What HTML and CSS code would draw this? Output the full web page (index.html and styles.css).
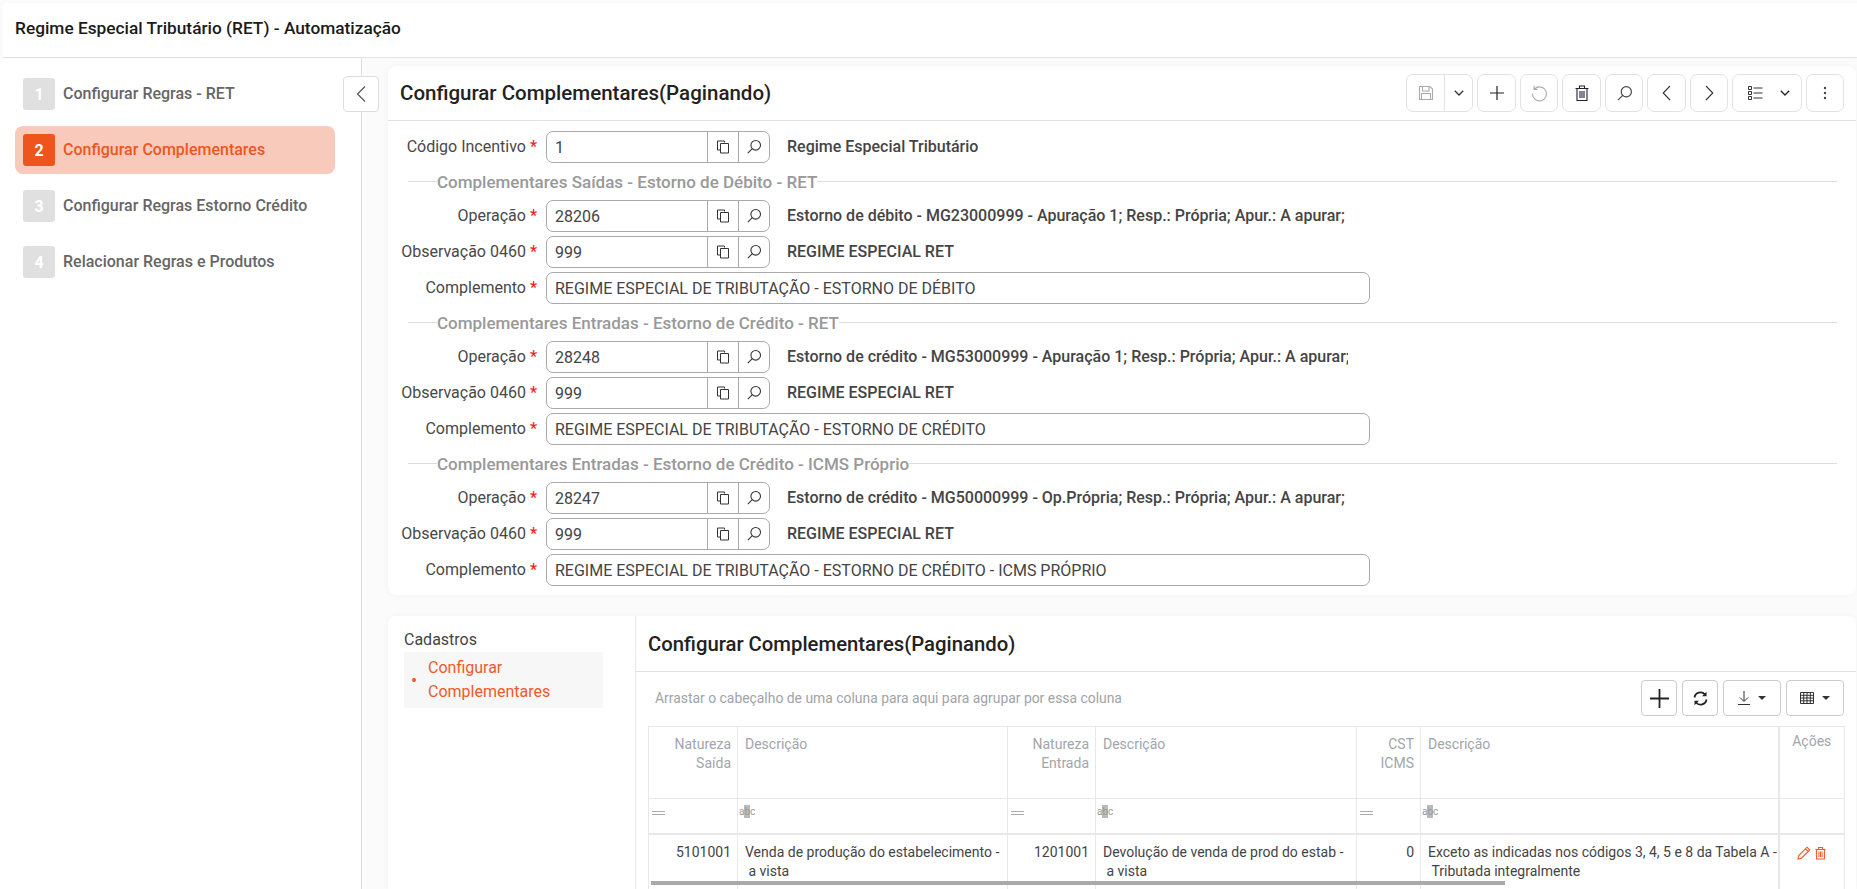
FILE: index.html
```html
<!DOCTYPE html>
<html lang="pt-BR">
<head>
<meta charset="utf-8">
<title>Regime Especial Tributário (RET) - Automatização</title>
<link rel="stylesheet" href="styles.css">
</head>
<body>
<svg class="defs" aria-hidden="true">
  <symbol id="copy" viewBox="0 0 16 16"><path d="M9.500 3.500V2H2.500v9H5M5.500 4.500h8v9.500h-8z" fill="none" stroke="currentColor"/></symbol>
  <symbol id="search" viewBox="0 0 16 16"><circle cx="9.700" cy="6.300" r="4.800" fill="none" stroke="currentColor" stroke-width="1.100"/><path d="M6.300 9.700 1.800 14.200" stroke="currentColor" stroke-width="1.100"/></symbol>
</svg>
<header class="app-header">Regime Especial Tributário (RET) - Automatização</header>
<div class="app-body">
  <aside class="wizard">
    <button class="collapse" type="button"><svg width="12" height="18" viewBox="0 0 12 18"><path d="M10 1.500 2.500 9l7.500 7.500" fill="none" stroke="#555" stroke-width="1.200"/></svg></button>
    <div class="step"><span class="step-num">1</span><span class="step-text">Configurar Regras - RET</span></div>
    <div class="step active"><span class="step-num">2</span><span class="step-text">Configurar Complementares</span></div>
    <div class="step"><span class="step-num">3</span><span class="step-text">Configurar Regras Estorno Crédito</span></div>
    <div class="step"><span class="step-num">4</span><span class="step-text">Relacionar Regras e Produtos</span></div>
  </aside>
  <main class="content">
    <section class="card form-card">
      <div class="form-head">
        <h1>Configurar Complementares(Paginando)</h1>
        <div class="toolbar">
          <div class="tbtn group"><span class="seg seg-save"><svg width="16" height="16" viewBox="0 0 16 16"><path d="M1.500 1.500h10.500l2.500 2.500v10.500h-13zM4.500 1.500v4.500h6.500v-4.500M3.500 14.500v-6h9v6" fill="none" stroke="#aaa" stroke-width="1.100"/></svg></span><span class="seg seg-caret"><svg width="10" height="6" viewBox="0 0 10 6"><path d="M.8.800 5 5 9.200.800" fill="none" stroke="#333" stroke-width="1.300"/></svg></span></div>
          <div class="tbtn w39"><svg width="16" height="16" viewBox="0 0 16 16"><path d="M8 1v14M1 8h14" stroke="#222" stroke-width="1.200"/></svg></div>
          <div class="tbtn w37"><svg width="17" height="17" viewBox="0 0 17 17"><path d="M3.300 4.200A7 7 0 1 1 1.500 8.500M3 .8v3.600h3.600" fill="none" stroke="#aaa" stroke-width="1.100"/></svg></div>
          <div class="tbtn w39"><svg width="14" height="16" viewBox="0 0 14 16"><path d="M.5 3.500h13M4.500 3.500V1h5v2.500M2 3.500v12h10v-12M5 6v7M7 6v7M9 6v7" fill="none" stroke="#223" stroke-width="1.100"/></svg></div>
          <div class="tbtn w37"><svg width="17" height="17" viewBox="0 0 16 16"><use href="#search"/></svg></div>
          <div class="tbtn w39"><svg width="9" height="16" viewBox="0 0 9 16"><path d="M8 1 1.200 8 8 15" fill="none" stroke="#333" stroke-width="1.100"/></svg></div>
          <div class="tbtn w37"><svg width="9" height="16" viewBox="0 0 9 16"><path d="M1 1l6.800 7L1 15" fill="none" stroke="#333" stroke-width="1.100"/></svg></div>
          <div class="tbtn w69"><svg width="15" height="14" viewBox="0 0 15 14"><path d="M.5.500h3v3h-3zM.5 5.500h3v3h-3zM.5 10.500h3v3h-3zM5.500 2h9M5.500 7h9M5.500 12h9" fill="none" stroke="#333"/></svg><svg width="10" height="6" viewBox="0 0 10 6"><path d="M.8.800 5 5 9.200.800" fill="none" stroke="#222" stroke-width="1.300"/></svg></div>
          <div class="tbtn w37"><svg width="4" height="14" viewBox="0 0 4 14"><circle cx="2" cy="2" r="1.200" fill="#444"/><circle cx="2" cy="7" r="1.200" fill="#444"/><circle cx="2" cy="12" r="1.200" fill="#444"/></svg></div>
        </div>
      </div>
      <div class="form-body">
        <div class="row">
          <label class="lbl">Código Incentivo <em>*</em></label>
          <div class="lookup"><span class="val">1</span><span class="add"><svg><use href="#copy"/></svg></span><span class="add"><svg><use href="#search"/></svg></span></div>
          <span class="desc">Regime Especial Tributário</span>
        </div>
        <div class="legend"><span>Complementares Saídas - Estorno de Débito - RET</span></div>
        <div class="row">
          <label class="lbl">Operação <em>*</em></label>
          <div class="lookup"><span class="val">28206</span><span class="add"><svg><use href="#copy"/></svg></span><span class="add"><svg><use href="#search"/></svg></span></div>
          <span class="desc">Estorno de débito - MG23000999 - Apuração 1; Resp.: Própria; Apur.: A apurar;</span>
        </div>
        <div class="row">
          <label class="lbl">Observação 0460 <em>*</em></label>
          <div class="lookup"><span class="val">999</span><span class="add"><svg><use href="#copy"/></svg></span><span class="add"><svg><use href="#search"/></svg></span></div>
          <span class="desc">REGIME ESPECIAL RET</span>
        </div>
        <div class="row">
          <label class="lbl">Complemento <em>*</em></label>
          <div class="textbox">REGIME ESPECIAL DE TRIBUTAÇÃO - ESTORNO DE DÉBITO</div>
        </div>
        <div class="legend"><span>Complementares Entradas - Estorno de Crédito - RET</span></div>
        <div class="row">
          <label class="lbl">Operação <em>*</em></label>
          <div class="lookup"><span class="val">28248</span><span class="add"><svg><use href="#copy"/></svg></span><span class="add"><svg><use href="#search"/></svg></span></div>
          <span class="desc">Estorno de crédito - MG53000999 - Apuração 1; Resp.: Própria; Apur.: A apurar;</span>
        </div>
        <div class="row">
          <label class="lbl">Observação 0460 <em>*</em></label>
          <div class="lookup"><span class="val">999</span><span class="add"><svg><use href="#copy"/></svg></span><span class="add"><svg><use href="#search"/></svg></span></div>
          <span class="desc">REGIME ESPECIAL RET</span>
        </div>
        <div class="row">
          <label class="lbl">Complemento <em>*</em></label>
          <div class="textbox">REGIME ESPECIAL DE TRIBUTAÇÃO - ESTORNO DE CRÉDITO</div>
        </div>
        <div class="legend"><span>Complementares Entradas - Estorno de Crédito - ICMS Próprio</span></div>
        <div class="row">
          <label class="lbl">Operação <em>*</em></label>
          <div class="lookup"><span class="val">28247</span><span class="add"><svg><use href="#copy"/></svg></span><span class="add"><svg><use href="#search"/></svg></span></div>
          <span class="desc">Estorno de crédito - MG50000999 - Op.Própria; Resp.: Própria; Apur.: A apurar;</span>
        </div>
        <div class="row">
          <label class="lbl">Observação 0460 <em>*</em></label>
          <div class="lookup"><span class="val">999</span><span class="add"><svg><use href="#copy"/></svg></span><span class="add"><svg><use href="#search"/></svg></span></div>
          <span class="desc">REGIME ESPECIAL RET</span>
        </div>
        <div class="row">
          <label class="lbl">Complemento <em>*</em></label>
          <div class="textbox">REGIME ESPECIAL DE TRIBUTAÇÃO - ESTORNO DE CRÉDITO - ICMS PRÓPRIO</div>
        </div>
      </div>
    </section>
    <section class="card detail-card">
      <nav class="detail-nav">
        <div class="nav-title">Cadastros</div>
        <div class="nav-item"><i></i><span>Configurar Complementares</span></div>
      </nav>
      <div class="detail-main">
        <h2>Configurar Complementares(Paginando)</h2>
        <div class="grid-wrap">
          <div class="grid-tools">
            <span class="group-hint">Arrastar o cabeçalho de uma coluna para aqui para agrupar por essa coluna</span>
            <div class="gbtn w36"><svg width="19" height="19" viewBox="0 0 19 19"><path d="M9.500 0v19M0 9.500h19" stroke="#222" stroke-width="1.800"/></svg></div>
            <div class="gbtn w36"><svg width="15" height="15" viewBox="0 0 15 15"><path d="M1.500 6.500A6 6 0 0 1 12 3.500M13.500 8.500A6 6 0 0 1 3 11.500" fill="none" stroke="#222" stroke-width="1.800"/><path d="M13.500 .8v4.500H9zM1.500 14.200V9.700H6z" fill="#222"/></svg></div>
            <div class="gbtn w58"><svg width="12" height="14" viewBox="0 0 12 14"><path d="M6 0v10M2 6.500 6 10.500 10 6.500M0 13.500h12" fill="none" stroke="#333"/></svg><b class="caret"></b></div>
            <div class="gbtn w58"><svg width="14" height="12" viewBox="0 0 14 12"><path d="M.5.500h13v11H.5zM.5 3.300h13M.5 6h13M.5 8.800h13M3.700.5v11M7 .5v11M10.300.5v11" fill="none" stroke="#333"/></svg><b class="caret"></b></div>
          </div>
          <div class="grid-box">
            <table class="grid">
              <colgroup><col class="c1"><col class="c2"><col class="c3"><col class="c4"><col class="c5"><col class="c6"><col class="c7"></colgroup>
              <thead>
                <tr class="head-row">
                  <th class="num">Natureza Saída</th><th>Descrição</th><th class="num">Natureza Entrada</th><th>Descrição</th><th class="num">CST ICMS</th><th>Descrição</th><th class="acts">Ações</th>
                </tr>
                <tr class="filter-row">
                  <td><i class="eq"></i></td><td><span class="abc">a<b>b</b>c</span></td><td><i class="eq"></i></td><td><span class="abc">a<b>b</b>c</span></td><td><i class="eq"></i></td><td><span class="abc">a<b>b</b>c</span></td><td class="acts-cell"></td>
                </tr>
              </thead>
              <tbody>
                <tr>
                  <td class="num">5101001</td><td>Venda de produção do estabelecimento - &nbsp;a vista</td><td class="num">1201001</td><td>Devolução de venda de prod do estab - &nbsp;a vista</td><td class="num">0</td><td class="tight">Exceto as indicadas nos códigos 3, 4, 5 e 8 da Tabela A - &nbsp;Tributada integralmente</td>
                  <td class="acts-cell"><svg width="14" height="14" viewBox="0 0 14 14"><path d="M1 13l.8-3.500L10 1.200 12.800 4 4.500 12.200zM8.500 2.800l2.800 2.800" fill="none" stroke="#f0592a" stroke-width="1.100"/></svg><svg width="11" height="14" viewBox="0 0 14 16"><path d="M.5 3.500h13M4.500 3.500V1h5v2.500M2 3.500v12h10v-12M5 6v7M7 6v7M9 6v7" fill="none" stroke="#f0592a" stroke-width="1.300"/></svg></td>
                </tr>
              </tbody>
            </table>
            <div class="hscroll"></div>
          </div>
        </div>
      </div>
    </section>
  </main>
</div>
</body>
</html>
```
FILE: styles.css
```css
* { box-sizing: border-box; }
html, body { margin: 0; height: 889px; overflow: hidden; }
body { background: #fbfbfb; font-family: Roboto, "Liberation Sans", sans-serif; font-size: 16px; color: #444; padding: 3px 0 0 3px; }
.defs { width: 0; height: 0; position: absolute; }
.app-header { height: 55px; background: #fff; border-bottom: 1px solid #e2e2e2; padding: 0 12px 5px; display: flex; align-items: center; font-size: 17.3px; font-weight: 500; color: #1a1a1a; border-top-left-radius: 4px; }
.app-body { display: flex; height: 831px; margin-left: -3px; position: relative; }
.wizard { width: 362px; flex: none; padding: 12px 26px 0 15px; display: flex; flex-direction: column; gap: 8px; border-right: 1px solid #ddd; background: #fff; position: relative; }
.collapse { position: absolute; left: 343px; top: 18px; width: 36px; height: 36px; background: #fff; border: 1px solid #ddd; border-radius: 4px; padding: 0; display: flex; align-items: center; justify-content: center; }
.step { width: 320px; height: 48px; border-radius: 8px; padding-left: 8px; display: flex; align-items: center; gap: 8px; font-size: 16px; font-weight: 500; color: #666; white-space: nowrap; }
.step-text { margin-bottom: 2px; }
.step-num { width: 32px; height: 32px; border-radius: 3px; background: #e0e0e0; color: #fff; font-size: 16px; font-weight: 700; display: flex; align-items: center; justify-content: center; }
.step.active { background: #f8cabb; color: #ee5620; }
.step.active .step-num { background: #ee551c; }
.content { flex: 1; padding: 8px 1px 0 26px; display: flex; flex-direction: column; gap: 21px; min-width: 0; }
.card { background: #fff; border-radius: 8px; box-shadow: 0 0 6px rgba(0,0,0,.04); }
.form-card { height: 529px; flex: none; }
.form-head { height: 55px; border-bottom: 1px solid #e2e2e2; display: flex; align-items: center; padding: 0 12px; }
.form-head h1 { flex: 1; margin: 0; font-size: 20.5px; font-weight: 500; color: #222; }
.toolbar { display: flex; gap: 4px; }
.tbtn { height: 38px; border: 1px solid #e2e2e2; border-radius: 7px; background: #fff; display: flex; align-items: center; justify-content: center; }
.tbtn.group { width: 67px; }
.w37 { width: 38px; }
.w39 { width: 39px; }
.w69 { width: 70px; gap: 17px; padding-left: 4px; }
.seg { height: 100%; display: flex; align-items: center; justify-content: center; }
.seg-save { width: 38px; border-right: 1px solid #e2e2e2; }
.seg-caret { flex: 1; }
.form-body { padding: 10px 0 0; display: flex; flex-direction: column; gap: 4px; }
.row { display: flex; align-items: center; height: 32px; }
.lbl { width: 149px; margin-right: 9px; padding-bottom: 2px; text-align: right; color: #484848; font-size: 16px; white-space: nowrap; }
.lbl em { color: #ff1a1a; font-style: normal; font-weight: 500; }
.lookup { width: 224px; height: 32px; flex: none; border: 1px solid #aaa; border-radius: 7px; display: flex; align-items: center; background: #fff; }
.val { flex: 1; padding-left: 8px; font-size: 16px; color: #444; }
.add { width: 31px; height: 100%; border-left: 1px solid #aaa; display: flex; align-items: center; justify-content: center; color: #333; }
.add svg { width: 16px; height: 16px; }
.desc { margin-left: 17px; padding-bottom: 2px; width: 561px; overflow: hidden; white-space: nowrap; font-weight: 500; color: #444; font-size: 16px; }
.textbox { width: 824px; height: 32px; border: 1px solid #aaa; border-radius: 7px; display: flex; align-items: center; padding-left: 8px; font-size: 16px; color: #444; white-space: nowrap; }
.legend { height: 29px; margin: 0 19px 0 20px; display: flex; align-items: center; color: #999; font-weight: 500; font-size: 17px; }
.legend::before { content: ""; width: 29px; height: 1px; background: #ddd; }
.legend::after { content: ""; flex: 1; height: 1px; background: #ddd; }
.detail-card { flex: 1; display: flex; min-height: 0; border-radius: 8px 8px 0 0; }
.detail-nav { width: 247px; flex: none; padding: 12px 32px 0 16px; }
.nav-title { height: 24px; line-height: 24px; font-size: 16px; color: #444; }
.nav-item { height: 56px; background: #f7f7f7; display: flex; align-items: center; padding: 0 32px 0 8px; color: #f0592a; font-size: 16px; line-height: 24px; gap: 12px; }
.nav-item i { width: 4px; height: 4px; border-radius: 50%; background: #f0592a; flex: none; }
.detail-main { flex: 1; min-width: 0; border-left: 1px solid #e8e8e8; }
.detail-main h2 { margin: 0; height: 56px; border-bottom: 1px solid #e2e2e2; padding: 0 13px 0 12px; display: flex; align-items: center; font-size: 20.3px; font-weight: 500; color: #222; }
.grid-wrap { padding: 8px 12px 0 12px; }
.grid-tools { display: flex; align-items: center; gap: 5px; height: 36px; margin-bottom: 10px; }
.group-hint { flex: 1; padding-left: 7px; font-size: 13.9px; color: #a0a4a8; }
.gbtn { height: 36px; border: 1px solid #ccc; border-radius: 4px; display: flex; align-items: center; justify-content: center; gap: 8px; background: #fff; }
.w36 { width: 36px; }
.w58 { width: 58px; }
.caret { width: 0; height: 0; border: 4px solid transparent; border-top-color: #333; border-bottom: 0; }
.grid-box { position: relative; }
.grid { width: 1196px; table-layout: fixed; border-collapse: collapse; font-size: 14px; color: #444; }
.c1 { width: 89px; } .c2 { width: 270px; } .c3 { width: 88px; } .c4 { width: 261px; } .c5 { width: 64px; } .c6 { width: 358px; } .c7 { width: 66px; }
.grid th, .grid td { border: 1px solid #e8e8e8; padding: 8px 4px 8px 7px; line-height: 19px; vertical-align: top; text-align: left; font-weight: 400; }
.grid .tight { padding-right: 0; }
.grid th { color: #a0a6ac; font-size: 14px; }
.grid .num { text-align: right; padding-right: 6px; }
.head-row { height: 72px; }
.grid .acts { text-align: center; border-left-width: 2px; padding: 5px 7px 0; }
.filter-row { height: 35px; }
.filter-row td { padding: 0; border-bottom-width: 2px; vertical-align: middle; }
.eq { display: block; width: 13px; height: 4px; margin: 0 0 6px 3px; border-top: 1px solid #aaa; border-bottom: 1px solid #aaa; }
.abc { display: inline-block; font-size: 10px; line-height: 12px; color: #999; letter-spacing: 0; margin: 0 0 1px 1px; vertical-align: top; }
.abc b { background: #bbb; color: #999; font-weight: 400; padding: 1px 0; }
.grid .acts-cell { border-left-width: 2px; padding: 8px 0 0 17px; }
.acts-cell svg { margin-right: 4px; vertical-align: middle; }
.hscroll { position: absolute; left: 3px; top: 155px; width: 854px; height: 4px; background: #a9a9a9; }
```
